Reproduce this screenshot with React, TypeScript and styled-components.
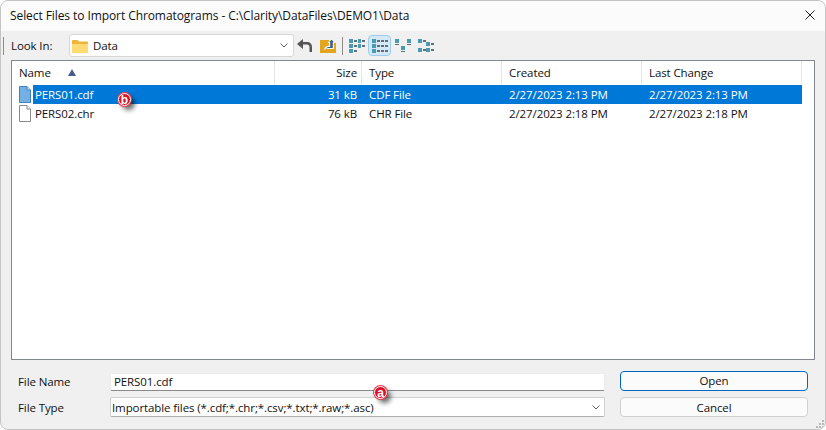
import React from 'react'
import styled, { createGlobalStyle } from 'styled-components'

const GlobalStyle = createGlobalStyle`
  html, body {
    margin: 0;
    padding: 0;
    background: #ffffff;
  }
  body {
    font-family: "Open Sans", "Noto Sans", "Liberation Sans", sans-serif;
    font-size: 11.5px;
    letter-spacing: -0.1px;
    color: #111111;
  }
`

const COLUMNS = '263px 87px 140px 140px 160px'

const Dialog = styled.div`
  position: relative;
  box-sizing: border-box;
  width: 826px;
  height: 430px;
  display: flex;
  flex-direction: column;
  background: #f0f0f0;
  border: 1px solid #c4c4c4;
  border-radius: 8px;
  overflow: hidden;
`

const TitleBar = styled.div`
  height: 30px;
  flex: none;
  box-sizing: border-box;
  display: flex;
  align-items: center;
  justify-content: space-between;
  padding: 0 10px 2px 9px;
  background: #fbfbfb;
  font-size: 12px;
  letter-spacing: -0.08px;
`

const Toolbar = styled.div`
  height: 29px;
  flex: none;
  display: flex;
  align-items: center;
  padding-left: 2px;
`

const Grip = styled.div`
  width: 1px;
  height: 18px;
  background: #8c8c8c;
  margin-right: 7px;
`

const LookInLabel = styled.span`
  width: 58px;
  flex: none;
`

const Combo = styled.div`
  box-sizing: border-box;
  width: 225px;
  height: 23px;
  display: flex;
  align-items: center;
  gap: 5px;
  padding: 0 5px 0 2px;
  background: #ffffff;
  border: 1px solid #d6d6d6;
  border-radius: 3px;
`

const ComboText = styled.span`
  flex: 1;
`

const ToolIcons = styled.div`
  display: flex;
  align-items: center;
  margin-left: -1px;
`

const ToolButton = styled.div<{ $active?: boolean }>`
  box-sizing: border-box;
  width: 23px;
  height: 21px;
  display: flex;
  align-items: center;
  justify-content: center;
  border-radius: 4px;
  border: 1px solid ${(p) => (p.$active ? '#9ccdf0' : 'transparent')};
  background: ${(p) => (p.$active ? '#d4e8f8' : 'transparent')};
`

const ToolDivider = styled.div`
  width: 1px;
  height: 18px;
  background: #8c8c8c;
  margin: 0 2px 0 3px;
`

const ListPanel = styled.div`
  box-sizing: border-box;
  width: 804px;
  height: 300px;
  margin-left: 10px;
  flex: none;
  background: #ffffff;
  border: 1px solid #828790;
`

const HeaderRow = styled.div`
  display: grid;
  grid-template-columns: ${COLUMNS};
  height: 24px;
`

const HeaderCell = styled.div<{ $right?: boolean }>`
  display: flex;
  align-items: center;
  justify-content: ${(p) => (p.$right ? 'flex-end' : 'flex-start')};
  padding: 0 ${(p) => (p.$right ? '4px' : '0')} 1px ${(p) => (p.$right ? '0' : '7px')};
  border-right: 1px solid #e5e5e5;
`

const SortArrow = styled.span`
  width: 0;
  height: 0;
  margin-left: 17px;
  border-left: 4px solid transparent;
  border-right: 4px solid transparent;
  border-bottom: 7px solid #4a5a8c;
`

const FileRow = styled.div`
  position: relative;
  height: 19px;
  display: grid;
  grid-template-columns: ${COLUMNS};
`

const RowIcon = styled.span`
  position: absolute;
  left: 7px;
  top: 1px;
  display: flex;
`

const Cell = styled.div<{ $right?: boolean; $first?: boolean; $selected?: boolean }>`
  display: flex;
  align-items: center;
  justify-content: ${(p) => (p.$right ? 'flex-end' : 'flex-start')};
  padding: 0 ${(p) => (p.$right ? '5px' : '0')} 1px ${(p) => (p.$first ? '2px' : p.$right ? '0' : '7px')};
  margin-left: ${(p) => (p.$first ? '21px' : '0')};
  background: ${(p) => (p.$selected ? '#0078d7' : 'transparent')};
  color: ${(p) => (p.$selected ? '#ffffff' : 'inherit')};
`

const Footer = styled.div`
  flex: 1;
  display: grid;
  grid-template-columns: 99px 495px 196px;
  grid-template-rows: 20px 20px;
  row-gap: 6px;
  padding: 11px 0 0 17px;
`

const FieldLabel = styled.div`
  display: flex;
  align-items: center;
`

const NameInput = styled.div`
  box-sizing: border-box;
  display: flex;
  align-items: center;
  padding: 0 0 1px 3px;
  margin: 2px 0 0 -7px;
  width: 495px;
  background: #ffffff;
  border: 1px solid #ececec;
  border-bottom: 1px solid #8a8a8a;
  border-radius: 2px;
`

const TypeSelect = styled(NameInput)`
  justify-content: space-between;
  padding: 0 4px 0 1px;
  border: 1px solid #d0d0d0;
  border-bottom-color: #b0b0b0;
  margin-top: 0;
`

const FooterButton = styled.div<{ $primary?: boolean }>`
  box-sizing: border-box;
  margin-left: 8px;
  padding-bottom: ${(p) => (p.$primary ? '1px' : '0')};
  display: flex;
  align-items: center;
  justify-content: center;
  background: #fbfbfb;
  border-radius: 4px;
  border: 1px solid ${(p) => (p.$primary ? '#0067c0' : '#d0d0d0')};
`

const Badge = styled.span<{ $x: number; $y: number }>`
  position: absolute;
  left: ${(p) => p.$x}px;
  top: ${(p) => p.$y}px;
  box-sizing: border-box;
  width: 13px;
  height: 13px;
  display: flex;
  align-items: center;
  justify-content: center;
  border-radius: 50%;
  background: #d8132a;
  border: 1px solid #ffffff;
  color: #ffffff;
  font-family: "Liberation Sans", sans-serif;
  font-size: 12px;
  font-weight: 700;
  letter-spacing: 0;
  line-height: 1;
  box-shadow: 0 0 0 1px #e8384c, 4px 4px 5px rgba(0, 0, 0, 0.6);
`

const ResizeGrip = styled.svg`
  position: absolute;
  right: 1px;
  bottom: 1px;
`

const Chevron = () => (
  <svg width="8" height="5" viewBox="0 0 8 5">
    <path d="M.5.5L4 4 7.500.5" fill="none" stroke="#606060" strokeWidth="1" />
  </svg>
)

const FolderIcon = () => (
  <svg width="16" height="14" viewBox="0 0 16 14">
    <path d="M0 2a1 1 0 0 1 1-1h4.500l1.500 1.500h8a1 1 0 0 1 1 1V13a1 1 0 0 1-1 1H1a1 1 0 0 1-1-1z" fill="#f0b43a" />
    <path d="M0 5h16v8a1 1 0 0 1-1 1H1a1 1 0 0 1-1-1z" fill="#ffdc73" />
  </svg>
)

const BackIcon = () => (
  <svg width="15" height="13" viewBox="0 0 15 13">
    <path d="M0 5l6-5v3h4c3 0 5 2 5 5v5h-2.500V8c0-1.500-1-2.400-2.500-2.400H6V10z" fill="#555555" />
  </svg>
)

const UpIcon = () => (
  <svg width="16" height="15" viewBox="0 0 16 15">
    <path d="M0 2h9v3h7v10H0z" fill="#e3a51e" />
    <path d="M4 12c.4-2.800 2-4.200 5-4.400V5H7.500L11.500.500 15.500 5H14v6H7.500c-1.500 0-2.500.3-3.500 1z" fill="#f4f4f4" />
    <path d="M5.500 10.800c.8-1.300 2-1.900 4.700-1.900V4h-1l2.300-2.300L13.800 4h-1v5.900H8c-1 0-1.800.3-2.500.9z" fill="#34608f" />
  </svg>
)

const ViewIcon = ({ kind }: { kind: 'list' | 'details' | 'tree' | 'flow' }) => {
  const teal = '#4a9ab0'
  const grey = '#5f6f78'
  const shapes: Record<string, [number, number, number, number, string][]> = {
    list: [
      [0, 0, 4, 4, teal], [5, 1, 3, 2, grey], [9, 0, 3, 4, teal], [13, 1, 3, 2, grey],
      [0, 5, 4, 4, teal], [5, 6, 3, 2, grey], [9, 5, 3, 4, teal], [13, 6, 3, 2, grey],
      [0, 10, 4, 4, teal], [5, 11, 3, 2, grey],
    ],
    details: [
      [0, 0, 4, 4, teal], [5, 1, 3, 2, grey], [9, 1, 3, 2, grey], [13, 1, 3, 2, grey],
      [0, 5, 4, 4, teal], [5, 6, 3, 2, grey], [9, 6, 3, 2, grey], [13, 6, 3, 2, grey],
      [0, 10, 4, 4, teal], [5, 11, 3, 2, grey], [9, 11, 3, 2, grey], [13, 11, 3, 2, grey],
    ],
    tree: [
      [0, 0, 4, 4, teal], [0, 5, 4, 1, grey], [12, 0, 4, 4, teal], [12, 5, 4, 1, grey],
      [6, 7, 4, 4, teal], [6, 12, 4, 1, grey],
    ],
    flow: [
      [0, 0, 4, 4, teal], [5, 1, 3, 2, grey], [0, 9, 4, 4, teal], [5, 10, 3, 2, grey],
      [8, 3, 4, 4, teal], [13, 4, 3, 2, grey], [8, 9, 4, 4, teal], [13, 10, 3, 2, grey],
    ],
  }
  return (
    <svg width="16" height="14" viewBox="0 0 16 14">
      {shapes[kind].map(([x, y, w, h, c], i) => (
        <rect key={i} x={x} y={y} width={w} height={h} fill={c} />
      ))}
    </svg>
  )
}

const FileIcon = ({ blue }: { blue?: boolean }) => (
  <svg width="12" height="17" viewBox="0 0 12 17">
    <path d="M.5.500h7.500l3.500 3.500v12.500H.5z" fill={blue ? '#74b0e4' : '#ffffff'} stroke={blue ? '#3f83bf' : '#8a8a8a'} />
    <path d="M8 .5v3.500h3.500" fill={blue ? '#cfe4f7' : '#ffffff'} stroke={blue ? '#3f83bf' : '#8a8a8a'} />
  </svg>
)

const CloseIcon = () => (
  <svg width="10" height="10" viewBox="0 0 10 10">
    <path d="M.5.5l9 9M9.500.5l-9 9" stroke="#222222" strokeWidth="1" />
  </svg>
)

const files = [
  { name: 'PERS01.cdf', size: '31 kB', type: 'CDF File', created: '2/27/2023 2:13 PM', changed: '2/27/2023 2:13 PM', selected: true },
  { name: 'PERS02.chr', size: '76 kB', type: 'CHR File', created: '2/27/2023 2:18 PM', changed: '2/27/2023 2:18 PM', selected: false },
]

const App: React.FC = () => {
  return (
    <>
      <GlobalStyle />
      <Dialog>
        <TitleBar>
          <span>Select Files to Import Chromatograms - C:\Clarity\DataFiles\DEMO1\Data</span>
          <CloseIcon />
        </TitleBar>
        <Toolbar>
          <Grip />
          <LookInLabel>Look In:</LookInLabel>
          <Combo>
            <FolderIcon />
            <ComboText>Data</ComboText>
            <Chevron />
          </Combo>
          <ToolIcons>
            <ToolButton><BackIcon /></ToolButton>
            <ToolButton><UpIcon /></ToolButton>
            <ToolDivider />
            <ToolButton><ViewIcon kind="list" /></ToolButton>
            <ToolButton $active><ViewIcon kind="details" /></ToolButton>
            <ToolButton><ViewIcon kind="tree" /></ToolButton>
            <ToolButton><ViewIcon kind="flow" /></ToolButton>
          </ToolIcons>
        </Toolbar>
        <ListPanel>
          <HeaderRow>
            <HeaderCell>Name<SortArrow /></HeaderCell>
            <HeaderCell $right>Size</HeaderCell>
            <HeaderCell>Type</HeaderCell>
            <HeaderCell>Created</HeaderCell>
            <HeaderCell>Last Change</HeaderCell>
          </HeaderRow>
          {files.map((f) => (
            <FileRow key={f.name}>
              <RowIcon><FileIcon blue={f.selected} /></RowIcon>
              <Cell $first $selected={f.selected}>{f.name}</Cell>
              <Cell $right $selected={f.selected}>{f.size}</Cell>
              <Cell $selected={f.selected}>{f.type}</Cell>
              <Cell $selected={f.selected}>{f.created}</Cell>
              <Cell $selected={f.selected}>{f.changed}</Cell>
            </FileRow>
          ))}
        </ListPanel>
        <Footer>
          <FieldLabel>File Name</FieldLabel>
          <NameInput>PERS01.cdf</NameInput>
          <FooterButton $primary>Open</FooterButton>
          <FieldLabel>File Type</FieldLabel>
          <TypeSelect>
            <span>Importable files (*.cdf;*.chr;*.csv;*.txt;*.raw;*.asc)</span>
            <Chevron />
          </TypeSelect>
          <FooterButton>Cancel</FooterButton>
        </Footer>
        <Badge $x={117} $y={92}>b</Badge>
        <Badge $x={373} $y={385}>a</Badge>
        <ResizeGrip width="8" height="8" viewBox="0 0 8 8">
          <rect x="6" y="0" width="2" height="2" fill="#b8b8b8" />
          <rect x="3" y="3" width="2" height="2" fill="#b8b8b8" />
          <rect x="6" y="3" width="2" height="2" fill="#b8b8b8" />
          <rect x="0" y="6" width="2" height="2" fill="#b8b8b8" />
          <rect x="3" y="6" width="2" height="2" fill="#b8b8b8" />
          <rect x="6" y="6" width="2" height="2" fill="#b8b8b8" />
        </ResizeGrip>
      </Dialog>
    </>
  )
}

export default App
